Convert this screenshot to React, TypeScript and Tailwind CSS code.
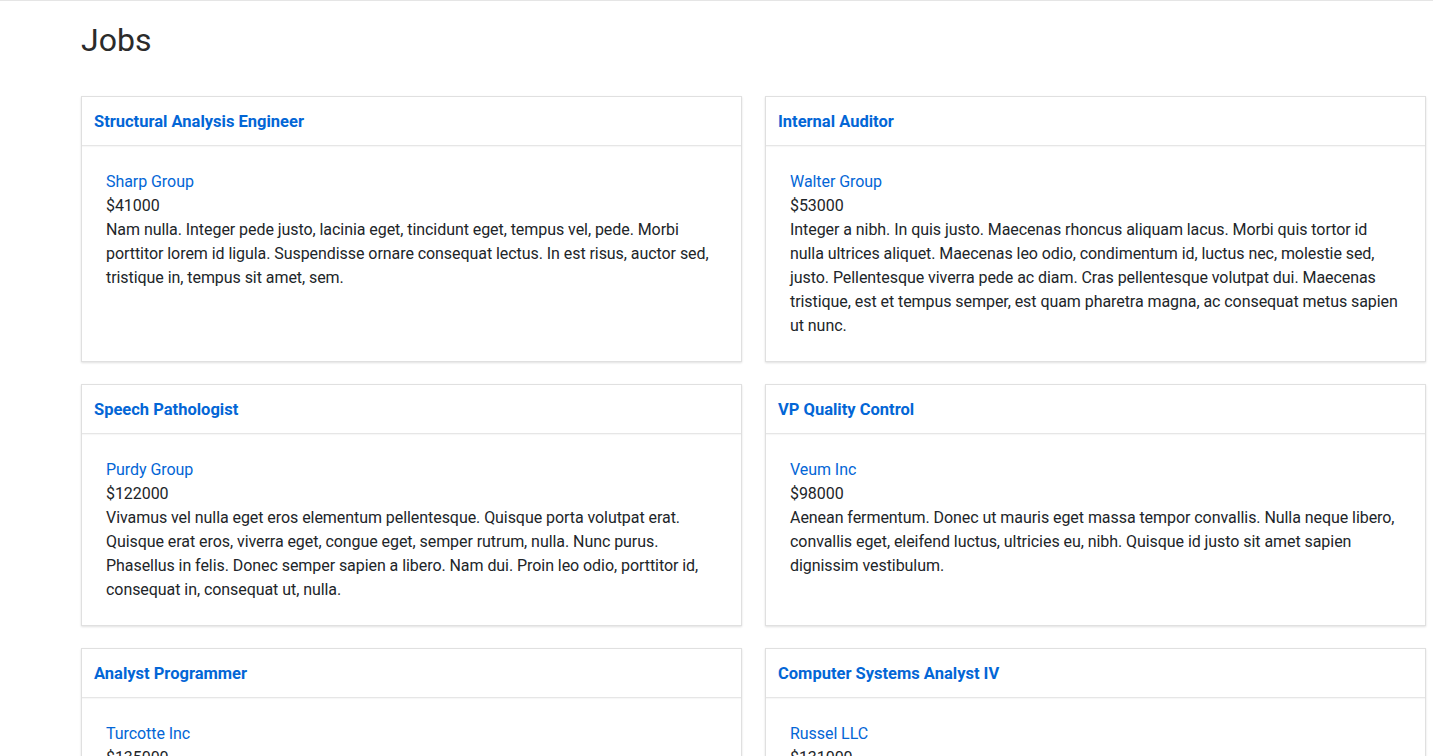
type Job = {
  id: number;
  title: string;
  company: string;
  salary: number;
  description: string;
};

const jobs: Job[] = [
  {
    id: 1,
    title: "Structural Analysis Engineer",
    company: "Sharp Group",
    salary: 41000,
    description:
      "Nam nulla. Integer pede justo, lacinia eget, tincidunt eget, tempus vel, pede. Morbi porttitor lorem id ligula. Suspendisse ornare consequat lectus. In est risus, auctor sed, tristique in, tempus sit amet, sem.",
  },
  {
    id: 2,
    title: "Internal Auditor",
    company: "Walter Group",
    salary: 53000,
    description:
      "Integer a nibh. In quis justo. Maecenas rhoncus aliquam lacus. Morbi quis tortor id nulla ultrices aliquet. Maecenas leo odio, condimentum id, luctus nec, molestie sed, justo. Pellentesque viverra pede ac diam. Cras pellentesque volutpat dui. Maecenas tristique, est et tempus semper, est quam pharetra magna, ac consequat metus sapien ut nunc.",
  },
  {
    id: 3,
    title: "Speech Pathologist",
    company: "Purdy Group",
    salary: 122000,
    description:
      "Vivamus vel nulla eget eros elementum pellentesque. Quisque porta volutpat erat. Quisque erat eros, viverra eget, congue eget, semper rutrum, nulla. Nunc purus. Phasellus in felis. Donec semper sapien a libero. Nam dui. Proin leo odio, porttitor id, consequat in, consequat ut, nulla.",
  },
  {
    id: 4,
    title: "VP Quality Control",
    company: "Veum Inc",
    salary: 98000,
    description:
      "Aenean fermentum. Donec ut mauris eget massa tempor convallis. Nulla neque libero, convallis eget, eleifend luctus, ultricies eu, nibh. Quisque id justo sit amet sapien dignissim vestibulum.",
  },
  {
    id: 5,
    title: "Analyst Programmer",
    company: "Turcotte Inc",
    salary: 135000,
    description:
      "Curabitur at ipsum ac tellus semper interdum. Mauris ullamcorper purus sit amet nulla. Quisque arcu libero, rutrum ac, lobortis vel, dapibus at, diam.",
  },
  {
    id: 6,
    title: "Computer Systems Analyst IV",
    company: "Russel LLC",
    salary: 131000,
    description:
      "Duis bibendum. Morbi non quam nec dui luctus rutrum. Nulla tellus. In sagittis dui vel nisl. Duis ac nibh. Fusce lacus purus, aliquet at, feugiat non, pretium quis, lectus.",
  },
];

function JobCard({ job }: { job: Job }) {
  return (
    <div className="flex flex-col border border-[#e0e0e0] bg-white shadow-[0_1px_2px_rgba(0,0,0,0.12)]">
      <div className="border-b border-[#e6e6e6] px-3 pt-[13px] pb-[11px] shadow-[0_1px_1px_rgba(0,0,0,0.03)]">
        <a className="text-[16.5px] font-bold leading-6 text-[#0366d6]">
          {job.title}
        </a>
      </div>
      <div className="px-6 pt-6 pb-[23px] text-base leading-6 tracking-[-0.06px] text-[#212529]">
        <a className="block text-[#0366d6]">{job.company}</a>
        <div>${job.salary}</div>
        <p>{job.description}</p>
      </div>
    </div>
  );
}

export default function App() {
  return (
    <div className="min-h-screen bg-white font-['Roboto',sans-serif]">
      <div className="h-px bg-[#e5e5e5]" />
      <main className="pl-[81px] pr-[7px]">
        <h2 className="mt-[20px] mb-[37px] text-[32px] font-normal leading-[38px] text-[#2b2b2b]">
          Jobs
        </h2>
        <div className="grid grid-cols-2 gap-x-[23px] gap-y-[22px]">
          {jobs.map((job) => (
            <JobCard key={job.id} job={job} />
          ))}
        </div>
      </main>
    </div>
  );
}
